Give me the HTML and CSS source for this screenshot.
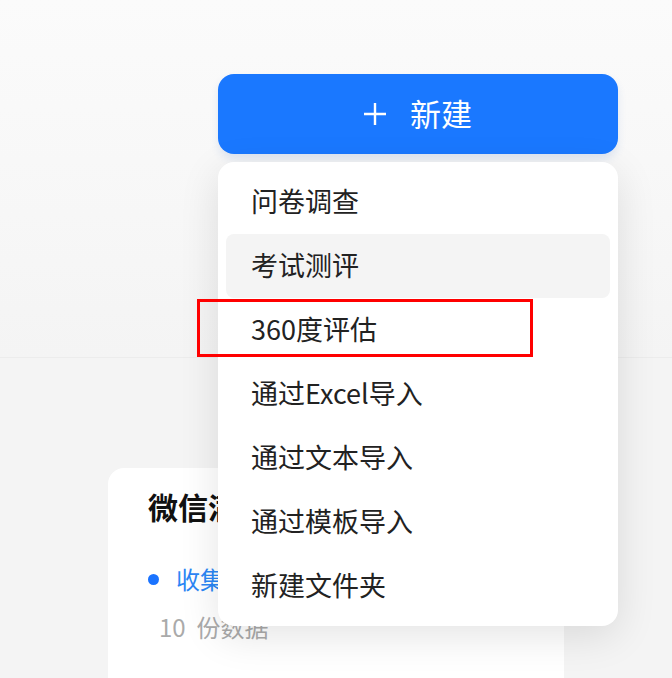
FILE: index.html
```html
<!DOCTYPE html>
<html lang="zh-CN">
<head>
<meta charset="utf-8">
<title>新建</title>
<link rel="stylesheet" href="styles.css">
</head>
<body>
<div class="screen">
  <header class="header">
    <div class="new-wrap">
      <button class="new-btn">
        <svg class="plus" width="22" height="22" viewBox="0 0 22 22"><path d="M11 0V22M0 11H22" stroke="#fff" stroke-width="2.4" fill="none"/></svg>
        <span>新建</span>
      </button>
      <ul class="menu">
        <li class="menu-item">问卷调查</li>
        <li class="menu-item active">考试测评</li>
        <li class="menu-item">360度评估</li>
        <li class="menu-item">通过Excel导入</li>
        <li class="menu-item">通过文本导入</li>
        <li class="menu-item">通过模板导入</li>
        <li class="menu-item">新建文件夹</li>
      </ul>
      <div class="mark"></div>
    </div>
  </header>
  <main class="content">
    <section class="card">
      <h2 class="card-title">微信满意度</h2>
      <div class="status"><span class="dot"></span><span class="status-text">收集中</span></div>
      <div class="count">10&nbsp; 份数据</div>
    </section>
  </main>
</div>
</body>
</html>
```

FILE: styles.css
```css
* { box-sizing: border-box; }
html, body { margin: 0; padding: 0; }
body {
  width: 672px;
  height: 678px;
  overflow: hidden;
  font-family: "Noto Sans CJK SC", "Noto Sans", sans-serif;
  background: #f4f4f4;
}
.screen { width: 672px; height: 678px; display: flex; flex-direction: column; overflow: hidden; }
.header {
  height: 358px;
  flex: none;
  background: linear-gradient(180deg, #fbfbfb 0%, #f7f7f7 60%, #f4f4f4 100%);
  border-bottom: 1px solid #ececec;
  padding: 74px 0 0 218px;
  position: relative;
  z-index: 2;
}
.new-wrap { position: relative; width: 400px; }
.new-btn {
  width: 400px;
  height: 80px;
  border: none;
  border-radius: 16px;
  background: #1a78ff;
  color: #fff;
  font-family: inherit;
  font-size: 31px;
  display: flex;
  align-items: center;
  justify-content: center;
  gap: 24px;
  padding: 0 0 3px 0;
  box-shadow: 0 5px 8px rgba(40, 100, 200, 0.12);
}
.new-btn span { line-height: 1; }
.plus { display: block; margin-top: 3px; }
.menu {
  position: absolute;
  top: 88px;
  left: 0;
  width: 400px;
  margin: 0;
  padding: 8px;
  list-style: none;
  background: #fff;
  border-radius: 16px;
  box-shadow: 0 10px 40px rgba(0, 0, 0, 0.11);
}
.menu-item {
  height: 64px;
  display: flex;
  align-items: center;
  padding: 0 0 3px 25px;
  font-size: 27px;
  color: #222;
  border-radius: 8px;
}
.menu-item.active { background: #f4f4f4; }
.mark {
  position: absolute;
  left: -21px;
  top: 225px;
  width: 336px;
  height: 58px;
  border: 3px solid #ff0000;
}
.content { flex: 1; padding: 110px 0 0 108px; position: relative; z-index: 1; min-height: 0; }
.card {
  width: 456px;
  height: 232px;
  background: #fff;
  border-radius: 16px;
  padding: 17px 0 0 40px;
}
.card-title {
  margin: 0;
  font-size: 30px;
  font-weight: 700;
  line-height: 42px;
  color: #111;
  white-space: nowrap;
}
.status {
  margin-top: 35px;
  display: flex;
  align-items: center;
  gap: 17px;
  height: 34px;
}
.dot { width: 11px; height: 11px; border-radius: 50%; background: #1a73ff; }
.status-text { font-size: 24px; color: #2b86f5; line-height: 34px; }
.count {
  margin-top: 14px;
  padding-left: 11px;
  font-size: 24px;
  line-height: 34px;
  color: #aaaaaa;
}
```
